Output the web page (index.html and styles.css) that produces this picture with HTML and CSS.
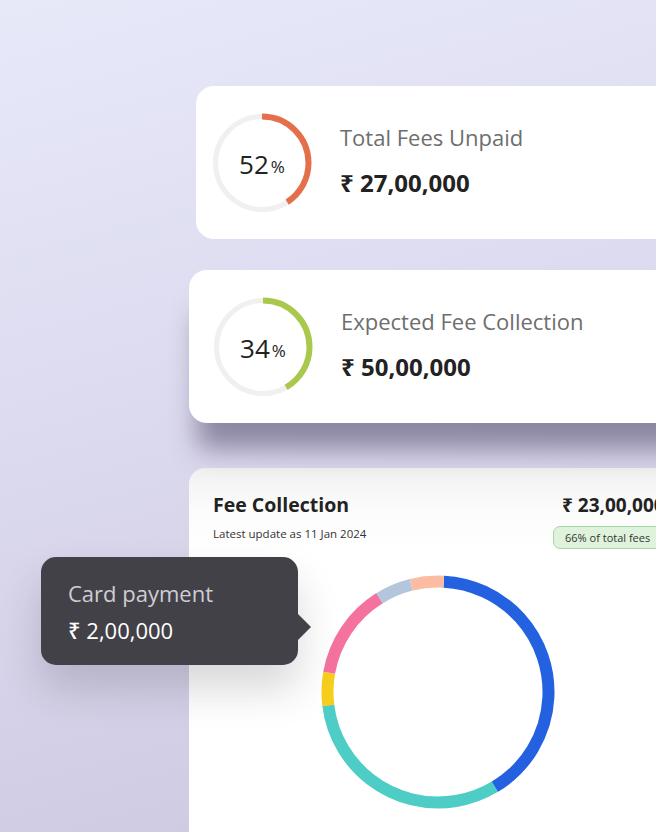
FILE: index.html
```html
<!DOCTYPE html>
<html lang="en">
<head>
<meta charset="utf-8">
<title>Fees dashboard</title>
<link rel="stylesheet" href="styles.css">
</head>
<body>
<main class="stage">
  <section class="card stat stat-unpaid">
    <div class="ring">
      <svg viewBox="0 0 100 100" width="100" height="100">
        <circle cx="50" cy="50" r="46.5" class="track"/>
        <circle cx="50" cy="50" r="46.5" class="arc arc-orange" stroke-dasharray="119.3 292.2" transform="rotate(-90 50 50)"/>
      </svg>
      <span class="ring-label">52<small>%</small></span>
    </div>
    <div class="stat-text">
      <h2 class="stat-title">Total Fees Unpaid</h2>
      <p class="stat-value">₹ 27,00,000</p>
    </div>
  </section>

  <section class="card stat stat-expected">
    <div class="ring">
      <svg viewBox="0 0 100 100" width="100" height="100">
        <circle cx="50" cy="50" r="46.5" class="track"/>
        <circle cx="50" cy="50" r="46.5" class="arc arc-green" stroke-dasharray="121.7 292.2" transform="rotate(-90 50 50)"/>
      </svg>
      <span class="ring-label">34<small>%</small></span>
    </div>
    <div class="stat-text">
      <h2 class="stat-title">Expected Fee Collection</h2>
      <p class="stat-value">₹ 50,00,000</p>
    </div>
  </section>

  <section class="card collection">
    <header class="collection-head">
      <div>
        <h2 class="collection-title">Fee Collection</h2>
        <p class="collection-sub">Latest update as 11 Jan 2024</p>
      </div>
      <div class="collection-total">
        <p class="collection-amount">₹ 23,00,000</p>
        <span class="badge">66% of total fees</span>
      </div>
    </header>
    <div class="donut">
      <svg viewBox="0 0 240 240" width="240" height="240">
        <circle cx="120" cy="120" r="110.5" class="seg" stroke="#2361e0" stroke-dasharray="281.6 694.3" transform="rotate(-87 120 120)"/>
        <circle cx="120" cy="120" r="110.5" class="seg" stroke="#4ecdc6" stroke-dasharray="219.9 694.3" transform="rotate(59 120 120)"/>
        <circle cx="120" cy="120" r="110.5" class="seg" stroke="#f6cf1d" stroke-dasharray="32.8 694.3" transform="rotate(173 120 120)"/>
        <circle cx="120" cy="120" r="110.5" class="seg" stroke="#f5729f" stroke-dasharray="92.6 694.3" transform="rotate(190 120 120)"/>
        <circle cx="120" cy="120" r="110.5" class="seg" stroke="#b4c6dc" stroke-dasharray="34.7 694.3" transform="rotate(238 120 120)"/>
        <circle cx="120" cy="120" r="110.5" class="seg" stroke="#fbbca2" stroke-dasharray="32.8 694.3" transform="rotate(256 120 120)"/>
      </svg>
    </div>
  </section>

  <div class="tooltip">
    <p class="tooltip-label">Card payment</p>
    <p class="tooltip-value">₹ 2,00,000</p>
  </div>
</main>
</body>
</html>
```

FILE: styles.css
```css
* { box-sizing: border-box; }
html, body {
  margin: 0;
  padding: 0;
}
body {
  width: 656px;
  height: 832px;
  overflow: hidden;
  font-family: "Open Sans", "Noto Sans", sans-serif;
  background: linear-gradient(165deg, #e7e9f9 0%, #dcdaef 45%, #ccc7e0 100%);
}
p, h2 { margin: 0; }

.stage {
  position: relative;
  display: flex;
  flex-direction: column;
  padding-top: 86px;
  height: 832px;
}

.card {
  background: #fff;
  border-radius: 18px;
  width: 560px;
}

.stat {
  display: flex;
  align-items: center;
  height: 153px;
  gap: 28px;
}
.stat-unpaid {
  margin-left: 196px;
  padding-left: 16px;
}
.stat-expected {
  margin-top: 31px;
  margin-left: 189px;
  padding-left: 24px;
  box-shadow: 0 34px 26px -8px rgba(75, 70, 100, 0.55);
  position: relative;
  z-index: 1;
}

.ring {
  position: relative;
  width: 100px;
  height: 100px;
  flex: none;
}
.ring svg { display: block; }
.track {
  fill: none;
  stroke: #f0f0f0;
  stroke-width: 5;
}
.arc {
  fill: none;
  stroke-width: 6;
}
.arc-orange { stroke: #e4704b; }
.arc-green { stroke: #aac84c; }
.ring-label {
  position: absolute;
  inset: 0;
  display: flex;
  align-items: center;
  justify-content: center;
  font-size: 26px;
  font-weight: 500;
  color: #222;
  padding-top: 2px;
}
.ring-label small {
  font-size: 17px;
  font-weight: 500;
  margin-left: 2px;
  margin-top: 5px;
}

.stat-text {
  display: flex;
  flex-direction: column;
  gap: 15px;
  margin-top: -4px;
}
.stat-title {
  font-weight: 400;
  font-size: 22px;
  color: #6e6e6e;
  line-height: 30px;
}
.stat-value {
  font-weight: 700;
  font-size: 24px;
  color: #222;
  line-height: 32px;
}

.collection {
  margin-top: 45px;
  margin-left: 189px;
  flex: 1;
  border-radius: 16px 16px 0 0;
  padding: 24px 0 0 24px;
  background: linear-gradient(180deg, #f1f1f1 0%, #fbfbfb 40px, #fff 80px);
}
.collection-head {
  display: grid;
  grid-template-columns: 349px auto;
}
.collection-title {
  font-size: 19.5px;
  font-weight: 700;
  color: #222;
  line-height: 26px;
}
.collection-sub {
  font-size: 11.5px;
  color: #333;
  margin-top: 8px;
}
.collection-total {
  display: flex;
  flex-direction: column;
  align-items: flex-start;
}
.collection-amount {
  font-size: 19px;
  font-weight: 700;
  color: #222;
  line-height: 26px;
  white-space: nowrap;
}
.badge {
  margin-top: 8px;
  margin-left: -9px;
  font-size: 11px;
  color: #333;
  background: #dff3dc;
  border: 1px solid #a6d7a1;
  border-radius: 7px;
  padding: 3px 11px;
  white-space: nowrap;
}

.donut {
  margin-top: 23px;
  margin-left: 105px;
}
.donut svg { display: block; }
.seg {
  fill: none;
  stroke-width: 12;
}

.tooltip {
  position: absolute;
  left: 41px;
  top: 557px;
  width: 257px;
  height: 108px;
  background: #434148;
  border-radius: 15px;
  padding: 21px 0 0 27px;
  box-shadow: 0 24px 40px rgba(40, 40, 50, 0.18);
  z-index: 2;
}
.tooltip::after {
  content: "";
  position: absolute;
  right: -13px;
  top: 56px;
  width: 0;
  height: 0;
  border-top: 14px solid transparent;
  border-bottom: 14px solid transparent;
  border-left: 14px solid #434148;
}
.tooltip-label {
  font-size: 22px;
  color: #cfcdd4;
  line-height: 30px;
}
.tooltip-value {
  font-size: 22px;
  font-weight: 500;
  color: #fff;
  line-height: 30px;
  margin-top: 7px;
}
```
